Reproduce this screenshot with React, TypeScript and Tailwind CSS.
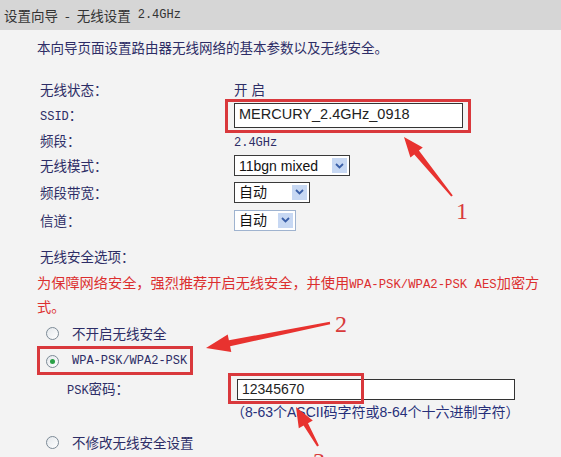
import React from "react";

const cjk = "font-['Noto_Sans_CJK_SC',sans-serif]";
const mono = "font-['Liberation_Mono','Noto_Sans_CJK_SC',monospace]";

function M({ children }: { children: React.ReactNode }) {
  return <span className={`${mono} text-[12px]`}>{children}</span>;
}

function Select({ value, width, light }: { value: string; width: number; light?: boolean }) {
  return (
    <div
      className={`flex items-center h-[21px] bg-white border ${
        light ? "border-[#9fb3cf]" : "border-[#3a3a3a]"
      } pl-[4px] pr-[2px] justify-between`}
      style={{ width }}
    >
      <span className="font-['Liberation_Sans','Noto_Sans_CJK_SC',sans-serif] text-[14px] text-[#111] leading-none">
        {value}
      </span>
      <span className="w-[15px] h-[15px] bg-[#c7d8f3] flex items-center justify-center">
        <svg width="9" height="6" viewBox="0 0 9 6">
          <path d="M1 1l3.5 3.5L8 1" fill="none" stroke="#3a5fa8" strokeWidth="1.8" />
        </svg>
      </span>
    </div>
  );
}

function Radio({ checked }: { checked?: boolean }) {
  return (
    <span className="w-[13px] h-[13px] rounded-full border border-[#7c8a96] bg-gradient-to-br from-[#e4e8ec] to-white flex items-center justify-center">
      {checked && <span className="w-[5px] h-[5px] rounded-full bg-[#2aa046]" />}
    </span>
  );
}

function Row({ label, h, children }: { label: React.ReactNode; h: number; children?: React.ReactNode }) {
  return (
    <div className="flex items-center" style={{ height: h }}>
      <div className="w-[197px] pl-[3px] text-[#2d2d66]">{label}</div>
      <div className="flex-1 flex items-center">{children}</div>
    </div>
  );
}

export default function App() {
  return (
    <div className={`relative w-[561px] h-[457px] overflow-hidden bg-[#f3f3f3] text-[13.5px] ${cjk}`}>
      {/* Title bar */}
      <div className="h-[30px] bg-[#d6d6d6] flex items-center pl-[4px] text-[#333] text-[13.5px] gap-[7px]">
        <span>设置向导</span>
        <span>-</span>
        <span>无线设置</span>
        <span className={`${mono} text-[12px]`}>2.4GHz</span>
      </div>

      <div className="pl-[37px]">
        <div className="mt-[7px] h-[20px] flex items-center text-[#2d2d66]">
          本向导页面设置路由器无线网络的基本参数以及无线安全。
        </div>

        <div className="mt-[19px]">
          <Row label="无线状态：" h={26}>
            <span className="text-[#2d2d66] tracking-[4px]">开启</span>
          </Row>
          <Row label={<><M>SSID</M>：</>} h={26}>
            <div className="relative">
              <div className="w-[229px] h-[25px] bg-white border border-[#333] flex items-center pl-[4px] font-['Liberation_Sans',sans-serif] text-[14.5px] text-[#222]">
                MERCURY_2.4GHz_0918
              </div>
              <div className="absolute left-[-9px] top-[-4px] w-[246px] h-[34px] border-[3px] border-[#d9383c]" />
            </div>
          </Row>
          <Row label="频段：" h={25}>
            <span className="text-[#2d2d66]">
              <M>2.4GHz</M>
            </span>
          </Row>
          <Row label="无线模式：" h={25}>
            <Select value="11bgn mixed" width={116} />
          </Row>
          <Row label="频段带宽：" h={28}>
            <Select value="自动" width={76} />
          </Row>
          <Row label="信道：" h={28}>
            <Select value="自动" width={62} light />
          </Row>
        </div>

        <div className="mt-[12px] h-[20px] flex items-center pl-[3px] text-[#2d2d66]">无线安全选项：</div>

        <div className="mt-[6px] text-[#dc2f2f] leading-[21px] text-[14.2px]">
          为保障网络安全，强烈推荐开启无线安全，并使用<span className={`${mono} text-[12.3px]`}>WPA-PSK/WPA2-PSK AES</span>加密方
          <br />
          式。
        </div>

        <div className="mt-[5px] h-[22px] flex items-center pl-[9px] gap-[13px] text-[#2d2d66]">
          <Radio />
          <span>不开启无线安全</span>
        </div>

        <div className="mt-[6px] h-[22px] flex items-center pl-[9px] gap-[13px] text-[#2d2d66] relative">
          <Radio checked />
          <M>WPA-PSK/WPA2-PSK</M>
          <div className="absolute left-0 top-[-4px] w-[156px] h-[29px] border-[3px] border-[#d9383c]" />
        </div>

        <div className="mt-[6px] flex items-center h-[22px]">
          <div className="w-[200px] pl-[30px] text-[#2d2d66]">
            <M>PSK</M>密码：
          </div>
          <div className="relative">
            <div className="w-[278px] h-[21px] bg-white border border-[#333] flex items-center pl-[4px] font-['Liberation_Sans',sans-serif] text-[14px] text-[#222]">
              12345670
            </div>
            <div className="absolute left-[-9px] top-[-6px] w-[136px] h-[31px] border-[3px] border-[#d9383c]" />
          </div>
        </div>

        <div className="h-[24px] flex items-center pl-[194px] text-[#27307a] font-['Liberation_Sans','Noto_Sans_CJK_SC',sans-serif] text-[14px]">
          （8-63个ASCII码字符或8-64个十六进制字符）
        </div>

        <div className="mt-[7px] h-[22px] flex items-center pl-[9px] gap-[13px] text-[#2d2d66]">
          <Radio />
          <span>不修改无线安全设置</span>
        </div>
      </div>

      {/* Annotation arrows */}
      <svg className="absolute left-0 top-0 pointer-events-none" width="561" height="457" viewBox="0 0 561 457">
        <polygon
          fill="#e8322f"
          points="404,137 422.8,147.4 418.9,150.6 452.8,195.4 451.2,196.6 414.3,154.4 410.4,157.5"
        />
        <polygon
          fill="#e8322f"
          points="206,348 227.7,334.4 228.9,340.3 329.8,321.8 330.2,324.2 230.1,346.2 231.3,352.1"
        />
        <polygon
          fill="#e8322f"
          points="296,407 312.8,420.5 308,423.2 318.9,445.5 317.1,446.5 303.6,425.6 298.8,428.3"
        />
      </svg>
      <span className="absolute left-[456px] top-[199px] font-['Liberation_Serif',serif] text-[24px] leading-none text-[#d83a3a]">1</span>
      <span className="absolute left-[335px] top-[312px] font-['Liberation_Serif',serif] text-[24px] leading-none text-[#d83a3a]">2</span>
      <span className="absolute left-[313px] top-[449px] font-['Liberation_Serif',serif] text-[24px] leading-none text-[#d83a3a]">3</span>
    </div>
  );
}
